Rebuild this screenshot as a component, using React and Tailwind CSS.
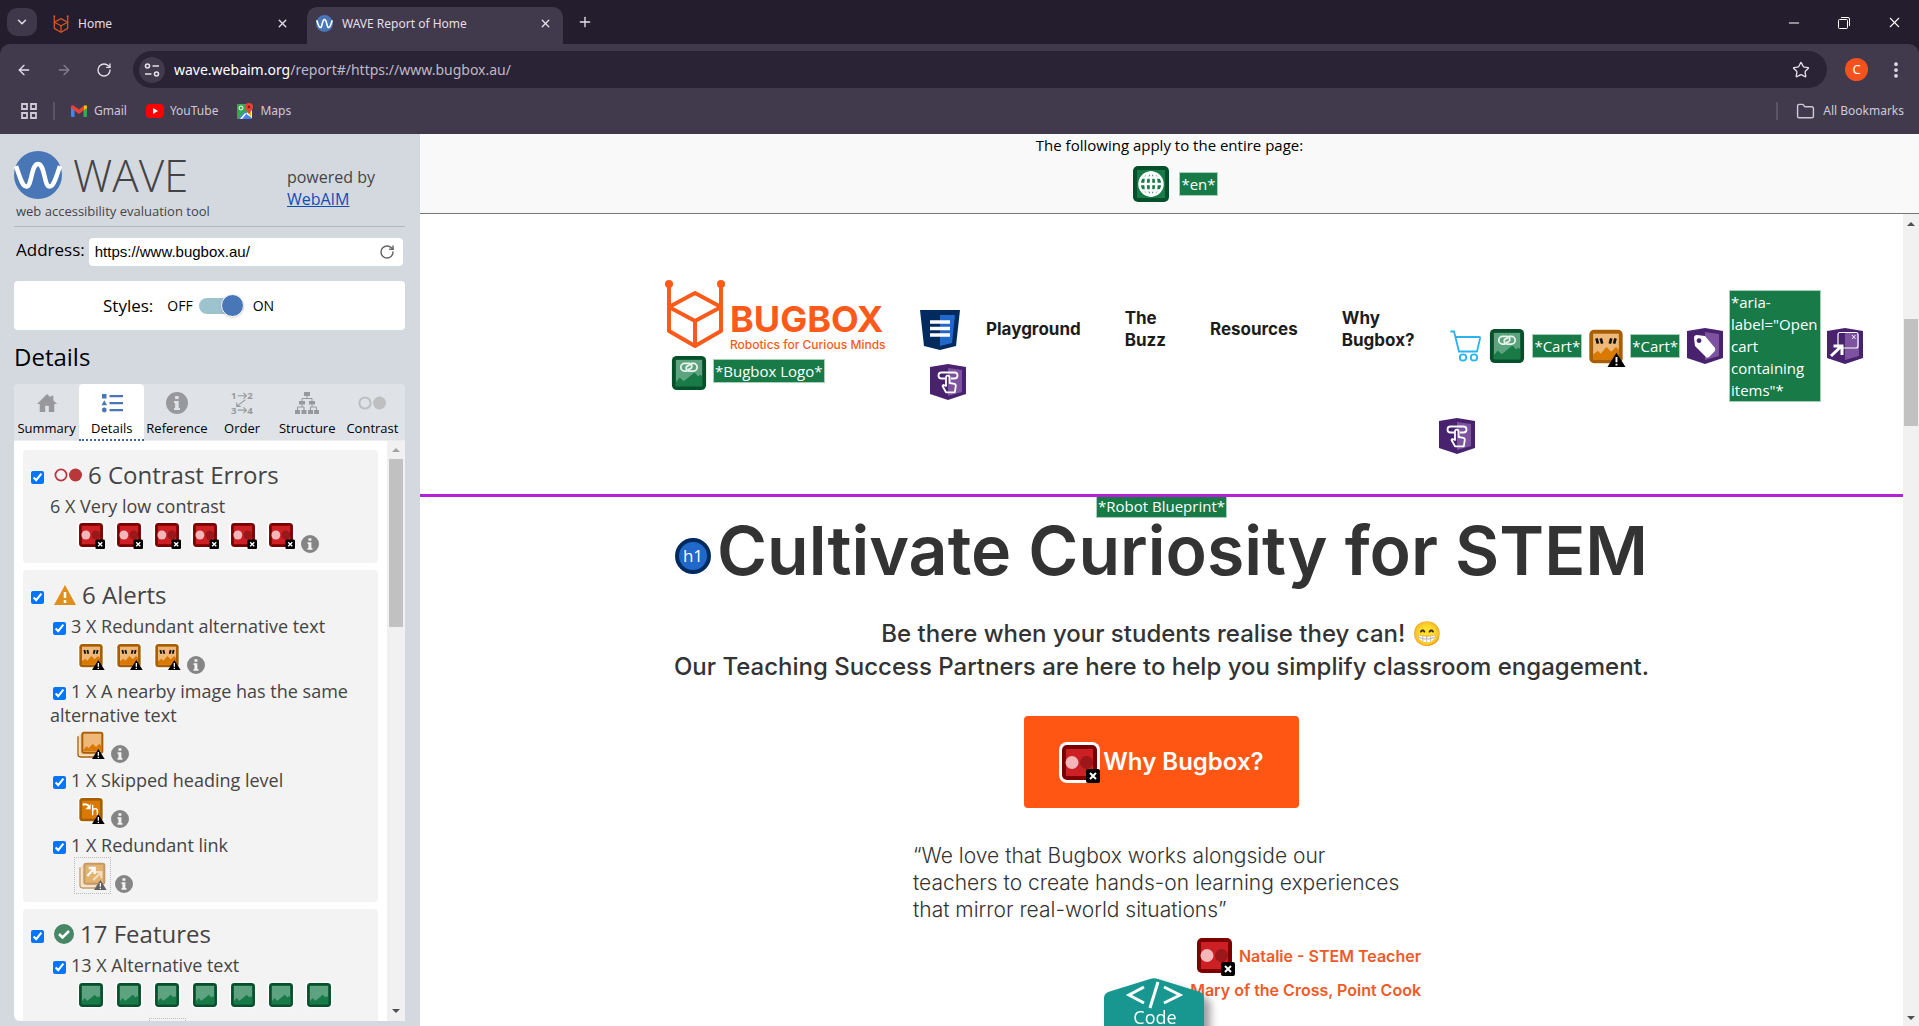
import React from "react";
import {
  ArrowLeft,
  ArrowRight,
  ChevronDown,
  Folder,
  Minus,
  Plus,
  RotateCw,
  Star,
  X,
  EllipsisVertical,
} from "lucide-react";

/* ---------- small drawings ---------- */

function BugboxMark({ className, strokeWidth = 4 }) {
  return (
    <svg viewBox="0 0 60 70" className={className} fill="none" stroke="currentColor" strokeWidth={strokeWidth} aria-hidden="true">
      <path d="M4 4v48l26 15 26-15V4" strokeLinejoin="round" />
      <path d="M4 28 30 14l26 14-26 14z" strokeLinejoin="round" />
      <path d="M30 42v25" />
      <circle cx="4" cy="5" r="4" fill="currentColor" stroke="none" />
      <circle cx="56" cy="5" r="4" fill="currentColor" stroke="none" />
    </svg>
  );
}

function WaveMark({ className }) {
  return (
    <svg viewBox="0 0 48 48" className={className} aria-hidden="true">
      <circle cx="24" cy="24" r="24" fill="#4876b6" />
      <path
        d="M2 15C6 26 8 35.500 12.500 35.500 18 35.500 17 13 24 13s6 22.500 11.500 22.500C40 35.500 42 26 46 15"
        fill="none"
        stroke="#fff"
        strokeWidth="4.500"
      />
    </svg>
  );
}

function ContrastIcon({ className }) {
  return (
    <svg viewBox="-3 -3 41 41" className={className} role="img" aria-label="Very low contrast">
      <rect x="-3" y="-3" width="41" height="41" rx="8" fill="#fff" />
      <rect width="35" height="35" rx="5" fill="#7c0000" />
      <rect x="4" y="4" width="27" height="27" fill="#cc2024" />
      <circle cx="24.500" cy="17.500" r="6.500" fill="#9b1719" />
      <circle cx="10" cy="17.500" r="6.500" fill="#f3b7b9" />
      <rect x="24" y="24" width="14" height="14" rx="2" fill="#000" />
      <path d="m28 28 6 6m0-6-6 6" stroke="#fff" strokeWidth="2" />
    </svg>
  );
}

function AlertBadge() {
  return (
    <g>
      <path d="M28.500 24 38 39H19z" fill="#000" />
      <path d="M28.500 28.500v5.500m0 1.500v2" stroke="#fff" strokeWidth="2" />
    </g>
  );
}

function AltAlertIcon({ className }) {
  return (
    <svg viewBox="-3 -3 41 42" className={className} role="img" aria-label="Redundant alternative text">
      <rect x="-2" y="-2" width="39" height="39" rx="7" fill="#fff" />
      <rect width="35" height="35" rx="5" fill="#a65f05" />
      <rect x="4" y="4" width="27" height="27" fill="#f0b878" />
      <path d="M4 26l5-4 3 3 6-7 5 5 5-5 3 3v10H4z" fill="#d97900" />
      <path d="M7.500 9l1.500 5.500m3-5.500 1.500 5.500M21.500 14.500 23 9m3 5.500L27.500 9" stroke="#111" strokeWidth="2.800" />
      <AlertBadge />
    </svg>
  );
}

function NearbyAlertIcon({ className }) {
  return (
    <svg viewBox="-3 -3 41 42" className={className} role="img" aria-label="Nearby image">
      <path d="M-2 5v27q0 4 4 4h25" fill="none" stroke="#a65f05" strokeWidth="2" />
      <rect x="0" y="2" width="30" height="32" fill="#f6d3a6" />
      <rect x="3" y="-2" width="33" height="33" rx="4" fill="#a65f05" />
      <rect x="6" y="1" width="27" height="27" fill="#f0b878" />
      <path d="M6 25l5-5 3 3 6-7 5 5 5-5 3 3v8H6z" fill="#d97900" />
      <AlertBadge />
    </svg>
  );
}

function HeadingAlertIcon({ className }) {
  return (
    <svg viewBox="-3 -3 41 42" className={className} role="img" aria-label="Skipped heading">
      <rect x="-2" y="-2" width="39" height="39" rx="7" fill="#fff" />
      <rect width="35" height="35" rx="5" fill="#a65f05" />
      <rect x="4" y="4" width="27" height="27" fill="#d97900" />
      <path d="M5 10q7-2 10 3" fill="none" stroke="#fff" strokeWidth="3" />
      <path d="M17 9v8H9z" fill="#fff" />
      <path d="M20 10v16m0-7q1-3 4-3 3 0 3 4v6" fill="none" stroke="#fff" strokeWidth="2" />
      <AlertBadge />
    </svg>
  );
}

function LinkAlertIcon({ className }) {
  return (
    <svg viewBox="-3 -3 41 42" className={className} role="img" aria-label="Redundant link" opacity="0.6">
      <path d="M-2 5v27q0 4 4 4h25" fill="none" stroke="#a65f05" strokeWidth="2" />
      <rect x="0" y="2" width="30" height="32" fill="#f6d3a6" />
      <rect x="3" y="-2" width="33" height="33" rx="4" fill="#a65f05" />
      <rect x="6" y="1" width="27" height="27" fill="#d98a1e" />
      <path d="m18 24 12-12m-9 0h9v9" fill="none" stroke="#f6d3a6" strokeWidth="3" />
      <path d="M9 18 20 6m-9 0h9v9" fill="none" stroke="#fff" strokeWidth="3.500" />
      <AlertBadge />
    </svg>
  );
}

function AltIcon({ className, linked }) {
  return (
    <svg viewBox="-3 -3 41 41" className={className} role="img" aria-label="Alternative text">
      <rect x="-2" y="-2" width="39" height="39" rx="7" fill="#fff" />
      <rect width="35" height="35" rx="5" fill="#04502a" />
      <rect x="4" y="4" width="27" height="27" fill="#5ea37f" />
      <path d="M4 27l4-5 4 4 4-3 7-6 4 4 2-2 2 2v10H4z" fill="#177a47" />
      {linked && (
        <path
          d="M15.500 15.500h-2.500a3.900 3.900 0 0 1 0-7.800h4.500a2.900 2.900 0 0 1 1 5.600l-2 .7M19.500 7.700h2.500a3.900 3.900 0 0 1 0 7.800h-4.500a2.900 2.900 0 0 1-1-5.600l2-.7"
          fill="none"
          stroke="#e8f5ec"
          strokeWidth="1.800"
        />
      )}
    </svg>
  );
}

function LanguageIcon({ className }) {
  return (
    <svg viewBox="0 0 36 36" className={className} role="img" aria-label="Language">
      <rect width="36" height="36" rx="5" fill="#04502a" />
      <rect x="4" y="4" width="28" height="28" fill="#177a47" />
      <g fill="none" stroke="#fff" strokeWidth="2.500">
        <circle cx="18" cy="18" r="11.500" />
        <ellipse cx="18" cy="18" rx="5.500" ry="11.500" />
        <path d="M6.500 18h23M8.500 11.500h19M8.500 24.500h19M18 6.500v23" />
      </g>
    </svg>
  );
}

function NavigationIcon({ className }) {
  return (
    <svg viewBox="0 0 40 40" className={className} role="img" aria-label="Navigation">
      <path d="M0 0h40l-4 36-16 4-16-4z" fill="#012a5e" />
      <path d="M20 5h15l-3 28-12 3z" fill="#2068c9" />
      <path d="M10 12h20M10 18.500h20M10 25h20" stroke="#fff" strokeWidth="3.400" />
    </svg>
  );
}

function AriaShape({ className, label, children }) {
  return (
    <svg viewBox="0 0 36 36" className={className} role="img" aria-label={label}>
      <path d="M0 3 18 0l18 3v27l-18 6-18-6z" fill="#48226f" />
      <path d="m18 4 14 2v22l-14 4z" fill="#7d539f" />
      {children}
    </svg>
  );
}

function AriaButtonIcon({ className }) {
  return (
    <AriaShape className={className} label="ARIA button">
      <path
        d="M15 14.500h-3.500a3 3 0 0 1 0-6h13a3 3 0 0 1 0 6H21M16 22V13.500a1.800 1.800 0 0 1 3.600 0V19l5 .8q1.400.5 1.200 2l-1 6.500H16L12.500 22l1-1z"
        fill="none"
        stroke="#fff"
        strokeWidth="1.800"
        strokeLinejoin="round"
      />
    </AriaShape>
  );
}

function AriaLabelIcon({ className }) {
  return (
    <AriaShape className={className} label="ARIA label">
      <path
        fillRule="evenodd"
        d="M7 10q0-3 3-3l8 1 10 12q1 2-1 4l-5 5q-2 1-3 0L8 18zm5 .2a2.400 2.400 0 1 0 .1 0z"
        fill="#fff"
      />
    </AriaShape>
  );
}

function AriaPopupIcon({ className }) {
  return (
    <AriaShape className={className} label="ARIA popup">
      <rect x="11" y="4.500" width="20" height="15.500" rx="2" fill="none" stroke="#fff" strokeWidth="1.200" />
      <path d="m25 7 3.500 4m0-4L25 11" stroke="#fff" strokeWidth="0.900" />
      <path d="M4 28 14 18.500M6.500 18H15v9" fill="none" stroke="#fff" strokeWidth="3" />
    </AriaShape>
  );
}

function CartIcon({ className }) {
  return (
    <svg viewBox="0 0 32 32" className={className} fill="none" stroke="#2bb3ee" strokeWidth="1.800" role="img" aria-label="Cart">
      <path d="M1 1.500h3l5 20h18M6 7h23q1.500 0 1 1.500l-3 13" strokeLinecap="round" />
      <circle cx="13" cy="27.500" r="3.200" />
      <circle cx="24" cy="27.500" r="3.200" />
    </svg>
  );
}

function InfoIcon({ className }) {
  return (
    <svg viewBox="0 0 22 22" className={className} fill="currentColor" aria-hidden="true">
      <path
        fillRule="evenodd"
        d="M11 0a11 11 0 1 0 0 22 11 11 0 0 0 0-22zm-1.900 4h3.600v3H9.100zM8 9h4.700v7H14v2H8v-2h1.100v-5H8z"
      />
    </svg>
  );
}

/* ---------- browser chrome ---------- */

function BrowserChrome() {
  return (
    <header className="shrink-0 bg-[#241d2e] font-['Noto_Sans',sans-serif] text-xs text-[#e4dfe9]">
      <div className="flex h-11 items-end">
        <button aria-label="Search tabs" className="mb-2 ml-[7px] flex h-7 w-[30px] items-center justify-center rounded-[10px] bg-[#3f384b]">
          <ChevronDown size={14} strokeWidth={2.500} />
        </button>
        <div className="flex h-[37px] w-[270px] items-center pb-1 pl-4 pr-[18px]">
          <BugboxMark className="h-[18px] w-4 text-[#d9541e]" strokeWidth={5} />
          <span className="ml-[9px] flex-1">Home</span>
          <button aria-label="Close tab"><X size={13} strokeWidth={2.500} /></button>
        </div>
        <div className="flex h-[37px] w-[256px] items-center rounded-t-[10px] bg-[#41394c] pb-1 pl-[9px] pr-[11px]">
          <WaveMark className="size-[17px]" />
          <span className="ml-[9px] flex-1">WAVE Report of Home</span>
          <button aria-label="Close tab"><X size={13} strokeWidth={2.500} /></button>
        </div>
        <button aria-label="New tab" className="mb-[14px] ml-[14px]"><Plus size={16} /></button>
        <div className="mb-[13px] ml-auto mr-4 flex items-center gap-[34px] text-white">
          <button aria-label="Minimise"><Minus size={16} strokeWidth={1.500} /></button>
          <button aria-label="Restore">
            <svg viewBox="0 0 16 16" className="size-4" fill="none" stroke="currentColor">
              <rect x="2.500" y="4.500" width="9" height="9" rx="1" />
              <path d="M5 2.500h7q1.500 0 1.500 1.500v7" />
            </svg>
          </button>
          <button aria-label="Close window"><X size={17} strokeWidth={1.500} /></button>
        </div>
      </div>

      <div className="rounded-t-[10px] bg-[#41394c] pt-[7px]">
        <div className="flex h-[37px] items-center pr-[13px]">
          <button aria-label="Back" className="ml-4"><ArrowLeft size={16} /></button>
          <button aria-label="Forward" className="ml-6 text-[#857e90]"><ArrowRight size={16} /></button>
          <button aria-label="Reload" className="ml-6"><RotateCw size={16} /></button>
          <div className="ml-[21px] flex h-[37px] flex-1 items-center rounded-full bg-[#2a2336] pl-[6px] pr-[17px]">
            <button aria-label="Site information" className="flex size-[26px] items-center justify-center rounded-full bg-[#41394c]">
              <svg viewBox="0 0 16 16" className="size-4" fill="none" stroke="currentColor" strokeWidth="1.600">
                <circle cx="3.500" cy="4" r="2" />
                <path d="M8.500 4H15M1 12h6.500" />
                <circle cx="12.500" cy="12" r="2" />
              </svg>
            </button>
            <div role="textbox" aria-label="Address bar" className="ml-[9px] flex-1 text-sm text-[#bfb9c6]">
              <span className="text-white">wave.webaim.org</span>/report#/https://www.bugbox.au/
            </div>
            <button aria-label="Bookmark"><Star size={18} strokeWidth={1.800} /></button>
          </div>
          <button aria-label="Profile" className="ml-[18px] size-[23px] rounded-full bg-[#f4511e] text-[13px] leading-[23px] text-white">C</button>
          <button aria-label="Menu" className="ml-[18px]"><EllipsisVertical size={20} strokeWidth={2.500} /></button>
        </div>

        <nav aria-label="Bookmarks" className="flex h-[46px] items-center pl-[21px] pr-[15px] text-[#d0cad6]">
          <button aria-label="Apps">
            <svg viewBox="0 0 16 16" className="size-4" fill="none" stroke="currentColor" strokeWidth="1.800">
              <path d="M1 1h5v5H1zM10 1h5v5h-5zM1 10h5v5H1zM10 10h5v5h-5z" />
            </svg>
          </button>
          <span className="ml-4 h-[18px] w-[2px] bg-[#5b5465]" />
          <a href="#gmail" className="ml-4 flex items-center gap-[7px]">
            <svg viewBox="0 0 16 12" className="h-3 w-4" aria-hidden="true">
              <path d="M0 2v9q0 1 1 1h2.500V4z" fill="#4285f4" />
              <path d="M16 2v9q0 1-1 1h-2.500V4z" fill="#34a853" />
              <path d="M12.500 1v4.500L16 3V1.500q0-2-2.500-1z" fill="#fbbc04" />
              <path d="M0 3V1.500q.5-2 2.500-1L8 4.500l5-4-.5 5L8 9 0 3z" fill="#ea4335" />
            </svg>
            Gmail
          </a>
          <a href="#youtube" className="ml-[19px] flex items-center gap-[6px]">
            <svg viewBox="0 0 18 14" className="h-[14px] w-[18px]" aria-hidden="true">
              <rect width="18" height="14" rx="4" fill="#f00" />
              <path d="M7 4v6l5-3z" fill="#fff" />
            </svg>
            YouTube
          </a>
          <a href="#maps" className="ml-[19px] flex items-center gap-[7px]">
            <svg viewBox="0 0 16 16" className="size-4" aria-hidden="true">
              <rect y="1" width="15" height="15" rx="1" fill="#34a853" />
              <path d="M1 16 8 8l7 8z" fill="#4285f4" />
              <path d="m5 16 9-11 1 3v7L8 10l-5 6z" fill="#fff" />
              <path d="m10 9 4 5V9z" fill="#fbbc04" />
              <circle cx="4" cy="5" r="2" fill="none" stroke="#fff" />
              <path d="M12 0a4 4 0 0 1 4 4q0 2-4 7-4-5-4-7a4 4 0 0 1 4-4z" fill="#ea4335" />
              <circle cx="12" cy="4" r="1.400" fill="#8c1d13" />
            </svg>
            Maps
          </a>
          <span className="ml-auto h-[18px] w-[2px] bg-[#5b5465]" />
          <button className="ml-[18px] flex items-center gap-2">
            <Folder size={19} strokeWidth={1.800} />
            All Bookmarks
          </button>
        </nav>
      </div>
    </header>
  );
}

/* ---------- sidebar ---------- */

const tabs = [
  {
    name: "Summary",
    icon: (
      <svg viewBox="0 0 24 22" className="h-5 w-[22px]" fill="currentColor">
        <path d="M12 1 1 12h3v9h6v-7h4v7h6v-9h3l-4-4V3h-3v2z" />
      </svg>
    ),
  },
  {
    name: "Details",
    icon: (
      <svg viewBox="0 0 22 20" className="h-5 w-[22px] text-[#4876b6]" fill="currentColor">
        <path d="M1 1h4.500v4.500H1zM3.300 7.300l2.700 5H.5zM8.500 2H22v2.300H8.500zM8.500 9H22v2.300H8.500zM8.500 16H22v2.300H8.500z" />
        <circle cx="3.300" cy="17" r="2.400" />
      </svg>
    ),
  },
  { name: "Reference", icon: <InfoIcon className="size-[22px]" /> },
  {
    name: "Order",
    icon: (
      <svg viewBox="0 0 24 24" className="size-[23px] overflow-visible" fill="none" stroke="currentColor" strokeWidth="1.200">
        <g fill="currentColor" stroke="none" fontFamily="Open Sans" fontSize="10" fontWeight="700">
          <text x="0" y="8">1</text>
          <text x="17" y="8">2</text>
          <text x="0" y="24">3</text>
          <text x="17" y="24">4</text>
        </g>
        <path d="M7 5h9m-3-3 3 3-3 3M7 20h9m-3-3 3 3-3 3M15 9l-9 7m0-4v4h4" />
      </svg>
    ),
  },
  {
    name: "Structure",
    icon: (
      <svg viewBox="0 0 24 22" className="h-[22px] w-6" fill="currentColor">
        <path d="M9 0h6v4H9zM4 9h6v3.500H4zM14 9h6v3.500h-6zM0 18h5v4H0zM6.500 18h5v4h-5zM13 18h5v4h-5zM19 18h5v4h-5z" />
        <path d="M12 4v2.500M7 9V6.500h10V9M2.500 18v-3H9v3M7 12.500V15M15.500 18v-3h6v3M17 12.500V15" fill="none" stroke="currentColor" />
      </svg>
    ),
  },
  {
    name: "Contrast",
    icon: (
      <svg viewBox="0 0 28 14" className="h-[14px] w-7 text-[#bdbfc1]" fill="currentColor">
        <circle cx="7" cy="7" r="5.600" fill="none" stroke="currentColor" strokeWidth="2" />
        <circle cx="21.500" cy="7" r="6.500" />
      </svg>
    ),
  },
];

function InfoButton() {
  return (
    <button aria-label="More information" className="mb-px ml-1 self-end text-[#858585]">
      <InfoIcon className="size-[18px]" />
    </button>
  );
}

function GroupHeading({ id, icon, children }) {
  return (
    <div className="flex items-center pb-px pl-2">
      <input id={id} type="checkbox" defaultChecked className="mr-[10px] mt-1 size-[13px] shrink-0 accent-[#0075ff]" />
      <label htmlFor={id} className="flex items-center gap-[6px] text-2xl leading-9">
        {icon}
        <span>{children}</span>
      </label>
    </div>
  );
}

function Issue({ id, label, children }) {
  return (
    <li>
      <div className="pl-[27px] pr-6 text-lg leading-6">
        <input id={id} type="checkbox" defaultChecked className="ml-[3px] mr-[5px] size-[13px] translate-y-[2px] accent-[#0075ff]" />
        <label htmlFor={id}>{label}</label>
      </div>
      <div className="flex h-[41px] items-start gap-[10px] pl-[54px] pt-1">{children}</div>
    </li>
  );
}

function IssueIcon({ children }) {
  return <button className="h-7 w-7">{children}</button>;
}

function Sidebar() {
  return (
    <aside className="flex w-[420px] shrink-0 flex-col bg-[#d4d9e0] pb-[5px] pl-[14px] pr-[15px] font-['Open_Sans',sans-serif] text-black">
      <div className="flex h-[93px] items-start border-b border-[#b4b8be] pt-4 text-[#444]">
        <div>
          <div className="flex h-[50px] items-center gap-[11px]">
            <WaveMark className="size-12" />
            <span className="text-[44px] font-light leading-[50px]">WAVE</span>
          </div>
          <p className="ml-[2px] mt-px text-[13px] leading-5">web accessibility evaluation tool</p>
        </div>
        <p className="ml-auto mr-[30px] mt-4 text-base leading-[22px]">
          powered by
          <br />
          <a href="#webaim" className="text-[#0f4fb5] underline">WebAIM</a>
        </p>
      </div>

      <div className="mt-[11px] flex items-center pl-[2px]">
        <label htmlFor="address" className="pb-1 text-[17px] leading-6">Address:</label>
        <div className="ml-1 mr-[2px] flex h-7 flex-1 items-center rounded bg-white pl-[6px] pr-2">
          <input id="address" defaultValue="https://www.bugbox.au/" className="min-w-0 flex-1 font-['Liberation_Sans',sans-serif] text-[15px] outline-none" />
          <button aria-label="Reload page" className="text-[#666]"><RotateCw size={16} strokeWidth={2.200} /></button>
        </div>
      </div>

      <div className="mt-[15px] flex h-[49px] items-center rounded bg-white pl-[89px]">
        <span id="styles-label" className="text-[17px]">Styles:</span>
        <span className="ml-[14px] text-sm">OFF</span>
        <button role="switch" aria-checked="true" aria-labelledby="styles-label" className="ml-[6px] flex h-4 w-[45px] items-center justify-end rounded-full bg-[#9dc3ce]">
          <span className="size-[23px] shrink-0 rounded-full border border-white bg-[#4876b6] shadow" />
        </button>
        <span className="ml-[9px] text-sm">ON</span>
      </div>

      <h2 className="mt-2 text-2xl leading-[38px]">Details</h2>

      <div role="tablist" className="mt-2 grid shrink-0 grid-cols-6 overflow-hidden rounded-t bg-[#dfe2e7] text-[13px]">
        {tabs.map((tab) => (
          <button
            key={tab.name}
            role="tab"
            aria-selected={tab.name === "Details"}
            className={
              tab.name === "Details"
                ? "flex h-[57px] flex-col items-center rounded-t border-b-2 border-dotted border-[#3b67a5] bg-white"
                : "flex h-[57px] flex-col items-center border-b border-[#ececee]"
            }
          >
            <span className="flex h-[35px] items-center pt-[2px] text-[#97999c]">{tab.icon}</span>
            <span className="leading-[18px]">{tab.name}</span>
          </button>
        ))}
      </div>

      <div className="flex min-h-0 flex-1 overflow-hidden rounded-bl-md bg-white text-[#444]">
        <div className="flex flex-1 flex-col gap-[7px] overflow-hidden pl-[9px] pr-[9px] pt-[9px]">
          <section className="shrink-0 rounded bg-[#f3f3f3] pb-[3px] pt-[7px]">
            <GroupHeading
              id="errors"
              icon={
                <svg viewBox="0 0 28 14" className="h-[14px] w-7" aria-hidden="true">
                  <circle cx="7" cy="7" r="5.600" fill="none" stroke="#b8373a" strokeWidth="1.800" />
                  <circle cx="21.500" cy="7" r="6.500" fill="#b8373a" />
                </svg>
              }
            >
              6 Contrast Errors
            </GroupHeading>
            <p className="pl-[27px] text-lg leading-6">6 X Very low contrast</p>
            <div className="flex h-[42px] items-start gap-[10px] pl-[54px] pt-[3px]">
              {[1, 2, 3, 4, 5, 6].map((n) => (
                <IssueIcon key={n}><ContrastIcon className="size-7" /></IssueIcon>
              ))}
              <span className="-ml-2 flex h-[33px]"><InfoButton /></span>
            </div>
          </section>

          <section className="shrink-0 rounded bg-[#f3f3f3] pb-1 pt-[7px]">
            <GroupHeading
              id="alerts"
              icon={
                <svg viewBox="0 0 22 20" className="h-5 w-[22px]" aria-hidden="true">
                  <path d="M11 0 22 20H0z" fill="#e08e1c" />
                  <path d="M11 7v6m0 2v3" stroke="#fff" strokeWidth="2.500" />
                </svg>
              }
            >
              6 Alerts
            </GroupHeading>
            <ul>
              <Issue id="redundant-alt" label="3 X Redundant alternative text">
                {[1, 2, 3].map((n) => (
                  <IssueIcon key={n}><AltAlertIcon className="size-7" /></IssueIcon>
                ))}
                <span className="-ml-2 flex h-[33px]"><InfoButton /></span>
              </Issue>
              <Issue id="nearby" label="1 X A nearby image has the same alternative text">
                <IssueIcon><NearbyAlertIcon className="size-7" /></IssueIcon>
                <span className="-ml-2 flex h-[33px]"><InfoButton /></span>
              </Issue>
              <Issue id="skipped" label="1 X Skipped heading level">
                <IssueIcon><HeadingAlertIcon className="size-7" /></IssueIcon>
                <span className="-ml-2 flex h-[33px]"><InfoButton /></span>
              </Issue>
              <Issue id="redundant-link" label="1 X Redundant link">
                <button className="-ml-[3px] -mt-1 flex size-[37px] shrink-0 items-center justify-center border border-dotted border-[#bbb]">
                  <LinkAlertIcon className="size-7" />
                </button>
                <span className="-ml-[10px] flex h-[33px]"><InfoButton /></span>
              </Issue>
            </ul>
          </section>

          <section className="shrink-0 rounded bg-[#f3f3f3] pt-[7px]">
            <GroupHeading
              id="features"
              icon={
                <svg viewBox="0 0 20 20" className="size-5" aria-hidden="true">
                  <circle cx="10" cy="10" r="10" fill="#468765" />
                  <path d="m5 10 3.500 3.500L15 7" fill="none" stroke="#fff" strokeWidth="2.500" />
                </svg>
              }
            >
              17 Features
            </GroupHeading>
            <ul>
              <Issue id="alt" label="13 X Alternative text">
                {[1, 2, 3, 4, 5, 6, 7].map((n) => (
                  <IssueIcon key={n}><AltIcon className="size-7" /></IssueIcon>
                ))}
              </Issue>
            </ul>
            <div className="ml-[126px] size-[37px] border border-dotted border-[#bbb]" />
          </section>
        </div>

        <div className="flex w-[18px] shrink-0 flex-col items-center bg-[#f1f1f1]">
          <svg viewBox="0 0 8 4" className="my-[7px] h-1 w-2" fill="#a3a3a3"><path d="M4 0 8 4H0z" /></svg>
          <div className="h-[29%] w-[14px] bg-[#c1c1c1]" />
          <svg viewBox="0 0 8 4" className="mb-2 mt-auto h-1 w-2" fill="#505050"><path d="M4 4 8 0H0z" /></svg>
        </div>
      </div>
    </aside>
  );
}

/* ---------- evaluated page ---------- */

function Tag({ children, className = "" }) {
  return (
    <span className={"inline-block border border-[#a8cfb9] bg-[#177a47] px-px font-['Open_Sans',sans-serif] text-[15px] leading-[22px] text-white " + className}>
      {children}
    </span>
  );
}

function SiteHeader() {
  return (
    <header className="flex h-[283px] shrink-0 items-start border-b-[3px] border-[#b322d8] pl-[245px] pt-16">
      <div className="w-[221px] shrink-0">
        <a href="#home" className="flex h-[72px] pt-px text-[#fc5a1a]">
          <BugboxMark className="h-[70px] w-[60px] shrink-0" />
          <span className="ml-[5px] mt-[21px] block whitespace-nowrap">
            <span className="block text-[36px] font-bold leading-[38px]">BUGBOX</span>
            <span className="block text-[12px] font-medium leading-[14px]">Robotics for Curious Minds</span>
          </span>
        </a>
        <div className="ml-1 mt-[3px] flex items-center gap-1">
          <AltIcon className="size-10" linked />
          <Tag className="mb-1">*Bugbox Logo*</Tag>
        </div>
      </div>
      <div className="ml-[34px] mt-8 w-[46px] shrink-0">
        <NavigationIcon className="size-10" />
        <AriaButtonIcon className="ml-[10px] mt-[14px] size-9" />
      </div>
      <nav className="ml-5 mt-[29px] flex h-11 items-center gap-11 text-[17px] font-bold leading-[22px] text-[#1c1c1c]">
        <a href="#playground">Playground</a>
        <a href="#buzz">The<br />Buzz</a>
        <a href="#resources">Resources</a>
        <a href="#why">Why<br />Bugbox?</a>
      </nav>
      <div className="ml-auto mr-10 mt-3 shrink-0">
        <div className="flex items-center">
          <CartIcon className="ml-[11px] size-8" />
          <AltIcon className="ml-[5px] size-10" linked />
          <Tag className="ml-[5px]">*Cart*</Tag>
          <AltAlertIcon className="ml-1 mt-[2px] size-10" />
          <Tag className="ml-1">*Cart*</Tag>
          <AriaLabelIcon className="ml-[7px] size-9" />
          <Tag className="ml-[6px] w-[92px]">*aria-label="Open cart containing items"*</Tag>
          <AriaPopupIcon className="ml-[6px] size-9" />
        </div>
        <AriaButtonIcon className="mt-4 size-9" />
      </div>
    </header>
  );
}

function Hero() {
  return (
    <section className="flex flex-1 flex-col items-center overflow-hidden text-[#333]">
      <Tag className="-mt-[3px]">*Robot Blueprint*</Tag>
      <h1 className="mt-[-4px] flex items-center whitespace-nowrap text-[68px] font-semibold leading-[72px]">
        <svg viewBox="0 0 36 36" className="mr-[6px] mt-3 size-9" role="img" aria-label="Heading level 1">
          <circle cx="18" cy="18" r="16" fill="#2068c9" stroke="#012a5e" strokeWidth="4" />
          <text x="18" y="24" textAnchor="middle" fontFamily="Open Sans" fontSize="17" fontWeight="400" fill="#fff">h1</text>
        </svg>
        Cultivate Curiosity for STEM
      </h1>
      <p className="mt-[31px] text-center text-2xl font-medium leading-[33px]">
        Be there when your students realise they can! 😁
        <br />
        Our Teaching Success Partners are here to help you simplify classroom engagement.
      </p>
      <button className="mt-[33px] flex h-[92px] w-[275px] shrink-0 items-center justify-center gap-[3px] rounded bg-[#ff5614] text-2xl font-semibold text-white">
        <ContrastIcon className="size-[41px]" />
        Why Bugbox?
      </button>
      <figure className="ml-[11px] mt-[34px] flex w-[508px] flex-col">
        <blockquote className="whitespace-nowrap text-[21px] font-light leading-[27px]">
          “We love that Bugbox works alongside our
          <br />
          teachers to create hands-on learning experiences
          <br />
          that mirror real-world situations”
        </blockquote>
        <figcaption className="mt-3 text-right text-base font-semibold leading-7 text-[#ef5a28]">
          <span className="flex items-center justify-end gap-1">
            <ContrastIcon className="size-[41px]" />
            Natalie - STEM Teacher
          </span>
          <span className="block">Mary of the Cross, Point Cook</span>
        </figcaption>
      </figure>
    </section>
  );
}

function EvaluatedPage() {
  return (
    <main className="flex min-w-0 flex-1 flex-col bg-white font-['Inter',sans-serif]">
      <div className="flex h-20 shrink-0 flex-col items-center border-b border-[#777] bg-[#f9f9f9] font-['Open_Sans',sans-serif]">
        <p className="text-[15px] leading-[22px]">The following apply to the entire page:</p>
        <div className="ml-3 mt-[10px] flex items-center gap-[10px]">
          <LanguageIcon className="size-9" />
          <Tag>*en*</Tag>
        </div>
      </div>
      <div className="flex min-h-0 flex-1">
        <div className="relative flex min-w-0 flex-1 flex-col overflow-hidden">
          <SiteHeader />
          <Hero />
          <button className="absolute -bottom-[58px] left-[684px] h-[106px] w-[100px] text-white drop-shadow-[6px_6px_4px_rgba(0,0,0,0.4)]">
            <svg viewBox="0 0 100 106" className="h-full w-full">
              <path d="M46 1q4-1.500 8 0l42 13q4 2 4 6v66q0 4-4 6l-42 13q-4 1.500-8 0L4 92q-4-2-4-6V20q0-4 4-6z" fill="#17978f" />
              <path d="M40 9 25 17l15 8M54 4l-8 26M60 9l16 8-16 8" fill="none" stroke="#fff" strokeWidth="3" />
              <text x="51" y="46" textAnchor="middle" fontFamily="Open Sans" fontSize="18" fill="#fff">Code</text>
            </svg>
          </button>
        </div>
        <div className="flex w-4 shrink-0 flex-col items-center bg-[#f1f1f1]">
          <svg viewBox="0 0 8 4" className="mt-2 h-1 w-2" fill="#505050"><path d="M4 0 8 4H0z" /></svg>
          <div className="mt-[93px] h-[107px] w-[14px] bg-[#c1c1c1]" />
          <svg viewBox="0 0 8 4" className="mb-[6px] mt-auto h-1 w-2" fill="#505050"><path d="M4 4 8 0H0z" /></svg>
        </div>
      </div>
    </main>
  );
}

export default function App() {
  return (
    <div className="flex h-screen flex-col overflow-hidden">
      <BrowserChrome />
      <div className="flex min-h-0 flex-1">
        <Sidebar />
        <EvaluatedPage />
      </div>
    </div>
  );
}
